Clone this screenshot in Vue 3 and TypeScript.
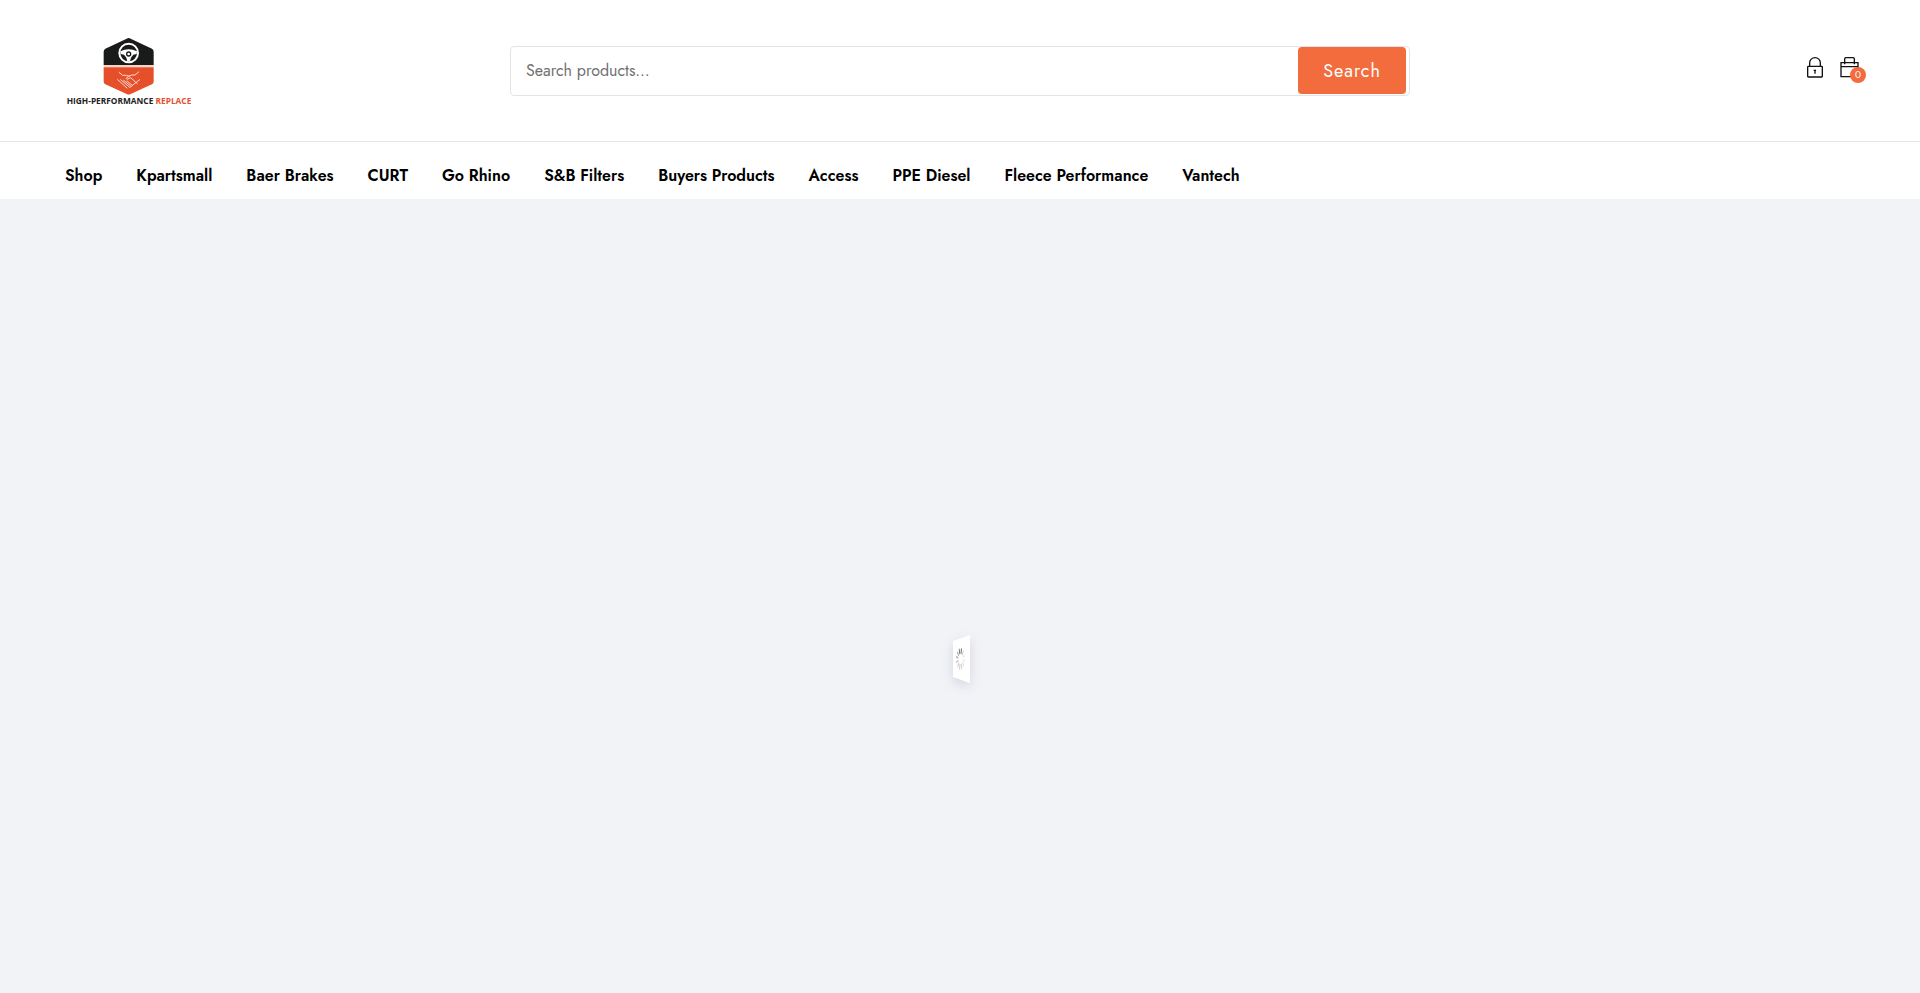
<script setup lang="ts">
import { ref } from 'vue'

const query = ref('')
const cartCount = ref(0)
const links: string[] = [
  'Shop', 'Kpartsmall', 'Baer Brakes', 'CURT', 'Go Rhino', 'S&B Filters',
  'Buyers Products', 'Access', 'PPE Diesel', 'Fleece Performance', 'Vantech',
]
const spokes = Array.from({ length: 12 }, (_, i) => ({
  angle: i * 30 + 12,
  opacity: [1, 0.3, 0.12, 0.1, 0.18, 0.3, 0.35, 0.3, 0.35, 0.4, 0.5, 0.9][i],
}))
</script>

<template>
  <div class="page">
    <header class="top">
      <a class="logo" href="#">
        <svg class="mark" viewBox="45 36 384 210">
          <path d="M161 120V80q0-6 5-9L230 41q6-4 12 0l64 30q5 3 5 9v40z" fill="#191b1b" />
          <path d="M161 120h150v7H161z" fill="#f6d5c8" />
          <path d="M161 127h150v43q0 5-5 8l-64 29q-6 3-12 0l-64-29q-5-3-5-8z" fill="#e5502b" />
          <circle cx="236" cy="84" r="28" fill="#191b1b" stroke="#fff" stroke-width="6" />
          <path d="M211 79q25-12 50 0l-1 8-10 2q-4 4-7 9l-3 11h-8l-3-11q-3-5-7-9l-10-2z" fill="#fff" />
          <circle cx="236" cy="87" r="6" fill="#fff" stroke="#191b1b" stroke-width="4" />
          <g fill="none" stroke="#ffd9cc" stroke-width="3" stroke-linecap="round" stroke-linejoin="round">
            <path d="M207 142l11 9h12l7 3 8-4h10l11-9" />
            <path d="M238 152l-10 8 3 3 11-5 20 18" />
            <path d="M203 164l28 25M212 164l27 23M221 166l21 17M231 168l16 13M269 164l-17 13-10 9" />
          </g>
          <text class="brand" x="237" y="237" text-anchor="middle">HIGH-PERFORMANCE <tspan class="accent">REPLACE</tspan></text>
        </svg>
      </a>

      <form class="search" role="search" @submit.prevent>
        <input v-model="query" type="search" placeholder="Search products…" aria-label="Search products" />
        <button type="submit">Search</button>
      </form>

      <div class="tools">
        <a href="#" aria-label="Account">
          <svg width="16" height="21" viewBox="50 36 48 63" fill="none" stroke="#111" stroke-width="4">
            <rect x="52" y="64" width="44" height="32" rx="2" />
            <path d="M58 64V53a16 15 0 0 1 32 0v11" />
            <path d="M70 76h7M74 75v11" />
          </svg>
        </a>
        <a class="cart" href="#" aria-label="Cart">
          <svg width="19" height="21" viewBox="150 36 57 63" fill="none" stroke="#111" stroke-width="4">
            <path d="M153 53h51v42h-51zM153 65h51M164 58V42q0-4 4-4h21q4 0 4 4v16" />
          </svg>
          <span class="count">{{ cartCount }}</span>
        </a>
      </div>
    </header>

    <nav class="menu" aria-label="Main">
      <a v-for="link in links" :key="link" href="#">{{ link }}</a>
    </nav>

    <main class="content">
      <svg class="loader" viewBox="0 0 18 50" role="img" aria-label="Loading">
        <path d="M1 7L18 1v48L1 43z" fill="#fff" />
        <g transform="translate(8.5 25) scale(.42 1)" stroke="#555" stroke-width="2" stroke-linecap="round">
          <path
            v-for="s in spokes" :key="s.angle" d="M0-10V-6"
            :transform="`rotate(${s.angle})`" :opacity="s.opacity"
          />
        </g>
      </svg>
    </main>
  </div>
</template>

<style>
body {
  margin: 0;
}
</style>

<style scoped>
.page {
  min-height: 100vh;
  display: flex;
  flex-direction: column;
  background: #f1f3f7;
  color: #111;
  font-family: Jost, Lato, sans-serif;
}
a {
  color: inherit;
  text-decoration: none;
}
.top {
  display: grid;
  grid-template-columns: 1fr minmax(0, 900px) 1fr;
  align-items: center;
  padding: 35px 61px 34px;
  background: #fff;
  border-bottom: 1px solid #e4e4e4;
}
.logo {
  justify-self: start;
  padding: 2px 0 0 4px;
}
.mark {
  display: block;
  width: 128px;
  height: 70px;
  overflow: visible;
}
.brand {
  font: 700 25px "Open Sans", sans-serif;
  fill: #222;
}
.accent {
  fill: #e5502b;
}
.search {
  display: flex;
  box-sizing: border-box;
  height: 50px;
  padding: 0 3px 1px 0;
  border: 1px solid #e4e4e4;
  border-radius: 4px;
}
.search input {
  flex: 1;
  min-width: 0;
  padding: 0 15px;
  border: 0;
  background: transparent;
  font: 16px/24px Jost, Lato, sans-serif;
  color: #111;
  outline: none;
}
.search input::placeholder {
  color: #707070;
  opacity: 1;
}
.search button {
  width: 108px;
  padding: 0;
  border: 0;
  border-radius: 4px;
  background: #f26c3d;
  color: #fff;
  font: 18px/24px Jost, Lato, sans-serif;
  letter-spacing: 1px;
}
.tools {
  justify-self: end;
  display: flex;
  gap: 17px;
  padding-bottom: 8px;
}
.tools svg {
  display: block;
}
.cart {
  position: relative;
}
.count {
  position: absolute;
  right: -7px;
  bottom: -5px;
  width: 16px;
  border-radius: 50%;
  background: #f26c3d;
  color: #fff;
  font-size: 10px;
  line-height: 16px;
  text-align: center;
}
.menu {
  display: flex;
  flex-wrap: wrap;
  gap: 0 34px;
  padding: 22px 65px 11px;
  background: #fff;
  color: #000;
  font-size: 16px;
  font-weight: 600;
  line-height: 24px;
}
.content {
  flex: 1;
  display: flex;
  justify-content: center;
  align-items: center;
}
.loader {
  width: 18px;
  height: 50px;
  margin: 126px 0 0 2px;
  overflow: visible;
  filter: drop-shadow(0 4px 6px rgb(40 50 80 / 14%));
}
</style>
